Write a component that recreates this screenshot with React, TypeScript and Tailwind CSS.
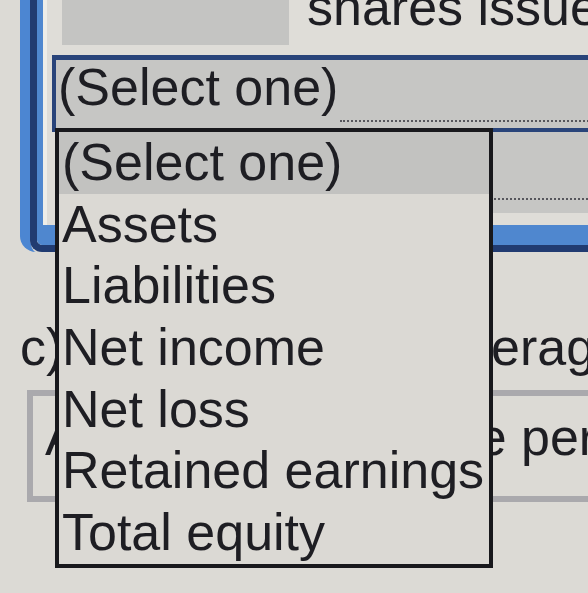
// Close-up of a native <select> dropdown open over a form question.

const options = [
  "(Select one)",
  "Assets",
  "Liabilities",
  "Net income",
  "Net loss",
  "Retained earnings",
  "Total equity",
];

export default function App() {
  return (
    <div className="relative h-[593px] w-[588px] overflow-hidden bg-[#dcdad5] font-['Liberation_Sans',Arial,sans-serif] text-[52px] leading-none text-[#1e1e23]">
      {/* blue question frame (top part cut off) */}
      <div className="-mt-[30px] ml-[20px] w-[640px] rounded-bl-[16px] border-l-[10px] border-[#4c86d2]">
        <div className="rounded-bl-[12px] border-b-[7px] border-l-[7px] border-[#213b71]">
          <div className="rounded-bl-[6px] border-b-[20px] border-l-[6px] border-[#4f87cf]">
            <div className="border-l-[4px] border-[#eeede8] bg-[#dfddd8] pb-[12px]">
              <div className="flex h-[75px]">
                <div className="ml-[15px] h-full w-[227px] bg-[#c4c4c2]" />
                <span className="ml-[18px] mt-[11px] whitespace-nowrap">shares issued</span>
              </div>

              {/* closed select */}
              <div className="ml-[5px] mt-[10px] flex h-[77px] border-b-[4px] border-l-[4px] border-t-[5px] border-[#29447a] bg-[#c6c6c4]">
                <span className="whitespace-nowrap pl-[2px] pt-[1px]">(Select one)</span>
                <span className="mb-[6px] ml-[2px] flex-1 self-end border-b-2 border-dotted border-[#56565c]" />
              </div>

              {/* second select row, mostly hidden */}
              <div className="ml-[11px] flex h-[81px] flex-col justify-end bg-[#c6c6c4] pb-[13px]">
                <div className="border-b-2 border-dotted border-[#56565c]" />
              </div>
            </div>
          </div>
        </div>
      </div>

      <div className="mt-[69px] grid grid-cols-[183px_1fr] whitespace-nowrap pl-[20px]">
        <span>c)</span>
        <span>Weighted average</span>
      </div>

      <div className="ml-[27px] mt-[17px] h-[112px] w-[600px] whitespace-nowrap border-[6px] border-r-0 border-[#aaa9ad] pl-[12px] pt-[15px]">
        Average net income per share
      </div>

      {/* open option list */}
      <ul className="absolute left-[55px] top-[128px] h-[440px] w-[438px] border-[4px] border-[#18181c] bg-[#dbd9d4]">
        {options.map((o, i) => (
          <li
            key={o}
            className={`h-[61.7px] whitespace-nowrap pl-[3px] leading-[61.7px] ${i === 0 ? "bg-[#c2c2c0]" : ""}`}
          >
            {o}
          </li>
        ))}
      </ul>
    </div>
  );
}
